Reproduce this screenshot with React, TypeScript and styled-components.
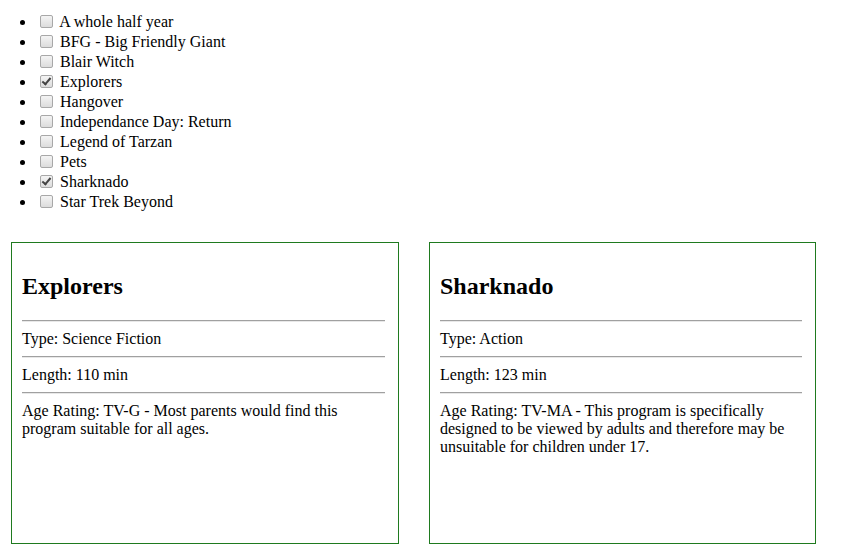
import styled, { createGlobalStyle } from "styled-components";

const GlobalStyle = createGlobalStyle`
  body {
    margin: 0;
    background: #fff;
    color: #000;
    font-family: "Liberation Serif", "Times New Roman", serif;
    font-size: 16px;
  }
`;

const Page = styled.div`
  padding: 12px 0 0 0;
`;

const MovieList = styled.ul`
  margin: 0;
  padding-left: 36px;
  list-style: disc;
`;

const MovieItem = styled.li`
  line-height: 20px;
  height: 20px;
`;

const Check = styled.input.attrs({ type: "checkbox" })`
  appearance: none;
  -webkit-appearance: none;
  width: 13px;
  height: 13px;
  margin: 0 3px 0 4px;
  vertical-align: -1px;
  border: 1px solid #a8a8a8;
  border-radius: 2px;
  background: linear-gradient(#f4f4f4, #dcdcdc);
  box-sizing: border-box;
  position: relative;

  &:checked::after {
    content: "";
    position: absolute;
    left: 3px;
    top: 0px;
    width: 3px;
    height: 7px;
    border: solid #444;
    border-width: 0 2px 2px 0;
    transform: rotate(40deg);
  }
`;

const Cards = styled.div`
  display: flex;
  gap: 30px;
  margin: 30px 0 0 11px;
`;

const Card = styled.div`
  width: 388px;
  height: 302px;
  box-sizing: border-box;
  border: 1px solid #1f7a1f;
  padding: 10px 13px 10px 10px;

  & + & {
    width: 387px;
  }
`;

const Title = styled.h2`
  font-size: 24px;
  line-height: 28px;
  margin: 19px 0 20px;
  font-weight: bold;
`;

const Rule = styled.hr`
  margin: 0;
  border: none;
  border-top: 1px solid #a0a0a0;
  border-bottom: 1px solid #e8e8e8;
`;

const Field = styled.div`
  margin: 8px 0;
  line-height: 18px;
`;

interface Movie {
  title: string;
  checked: boolean;
  type?: string;
  length?: number;
  rating?: string;
}

const movies: Movie[] = [
  { title: "A whole half year", checked: false },
  { title: "BFG - Big Friendly Giant", checked: false },
  { title: "Blair Witch", checked: false },
  {
    title: "Explorers",
    checked: true,
    type: "Science Fiction",
    length: 110,
    rating: "TV-G - Most parents would find this program suitable for all ages.",
  },
  { title: "Hangover", checked: false },
  { title: "Independance Day: Return", checked: false },
  { title: "Legend of Tarzan", checked: false },
  { title: "Pets", checked: false },
  {
    title: "Sharknado",
    checked: true,
    type: "Action",
    length: 123,
    rating:
      "TV-MA - This program is specifically designed to be viewed by adults and therefore may be unsuitable for children under 17.",
  },
  { title: "Star Trek Beyond", checked: false },
];

const App = () => {
  const selected = movies.filter((m) => m.checked);
  return (
    <Page>
      <GlobalStyle />
      <MovieList>
        {movies.map((movie) => (
          <MovieItem key={movie.title}>
            <Check defaultChecked={movie.checked} /> {movie.title}
          </MovieItem>
        ))}
      </MovieList>
      <Cards>
        {selected.map((movie) => (
          <Card key={movie.title}>
            <Title>{movie.title}</Title>
            <Rule />
            <Field>Type: {movie.type}</Field>
            <Rule />
            <Field>Length: {movie.length} min</Field>
            <Rule />
            <Field>Age Rating: {movie.rating}</Field>
          </Card>
        ))}
      </Cards>
    </Page>
  );
};

export default App;
